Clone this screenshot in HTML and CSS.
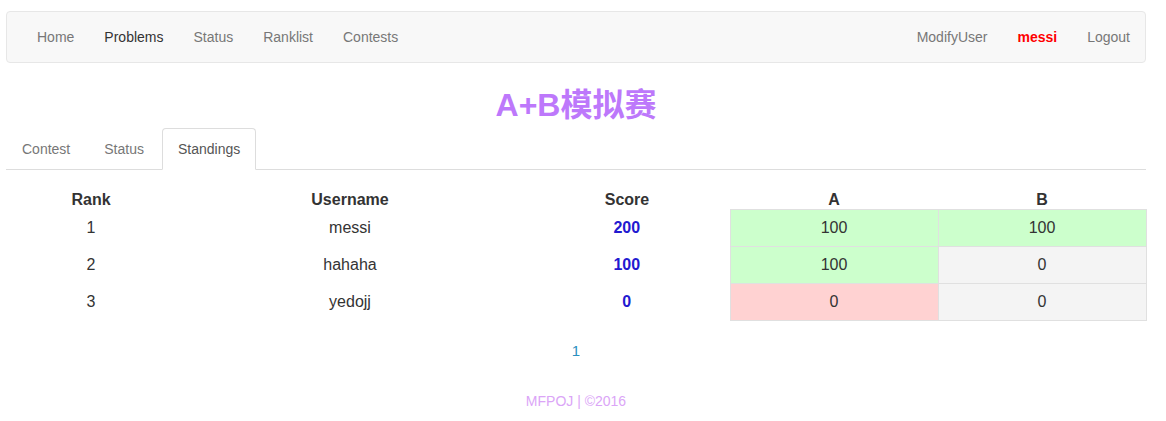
FILE: index.html
```html
<!DOCTYPE html>
<html lang="zh">
<head>
<meta charset="utf-8">
<title>A+B模拟赛</title>
<link rel="stylesheet" href="styles.css">
</head>
<body>
<div class="page">
  <nav class="navbar">
    <ul class="nav">
      <li><a href="#">Home</a></li>
      <li><a href="#" class="active">Problems</a></li>
      <li><a href="#">Status</a></li>
      <li><a href="#">Ranklist</a></li>
      <li><a href="#">Contests</a></li>
    </ul>
    <ul class="nav nav-right">
      <li><a href="#">ModifyUser</a></li>
      <li><a href="#" class="user">messi</a></li>
      <li><a href="#">Logout</a></li>
    </ul>
  </nav>

  <h2 class="title">A+B模拟赛</h2>

  <ul class="tabs">
    <li><a href="#">Contest</a></li>
    <li><a href="#">Status</a></li>
    <li><a href="#" class="current">Standings</a></li>
  </ul>

  <table class="standings">
    <colgroup>
      <col class="c-rank"><col class="c-user"><col class="c-score"><col class="c-prob"><col class="c-prob">
    </colgroup>
    <thead>
      <tr><th>Rank</th><th>Username</th><th>Score</th><th>A</th><th>B</th></tr>
    </thead>
    <tbody>
      <tr><td>1</td><td>messi</td><td class="score">200</td><td class="prob ac">100</td><td class="prob ac">100</td></tr>
      <tr><td>2</td><td>hahaha</td><td class="score">100</td><td class="prob ac">100</td><td class="prob none">0</td></tr>
      <tr><td>3</td><td>yedojj</td><td class="score">0</td><td class="prob wa">0</td><td class="prob none">0</td></tr>
    </tbody>
  </table>

  <div class="pager"><a href="#">1</a></div>

  <footer class="footer">MFPOJ | ©2016</footer>
</div>
</body>
</html>
```

FILE: styles.css
```css
* { box-sizing: border-box; }
html, body { margin: 0; padding: 0; background: #fff; }
body {
  font-family: "Liberation Sans", Arial, "Noto Sans CJK SC", sans-serif;
  font-size: 14px;
  line-height: 20px;
  color: #333;
}
a { text-decoration: none; }

.page { padding: 11px 20px 0 6px; }

.navbar {
  display: flex;
  justify-content: space-between;
  height: 52px;
  padding: 0 15px;
  background: #f8f8f8;
  border: 1px solid #e7e7e7;
  border-radius: 4px;
}
.nav { display: flex; list-style: none; margin: 0; padding: 0; }
.nav-right { margin-right: -15px; }
.nav a { display: block; padding: 15px; line-height: 20px; color: #777; }
.nav a.active { color: #333; }
.nav a.user { color: #ff0000; font-weight: bold; }

.title {
  margin: 25px 0 5px;
  text-align: center;
  font-size: 32px;
  line-height: 35px;
  font-weight: bold;
  color: #bd78fb;
}

.tabs {
  display: flex;
  list-style: none;
  margin: 0;
  padding: 0;
  border-bottom: 1px solid #ddd;
}
.tabs li { margin-bottom: -1px; }
.tabs a {
  display: block;
  margin-right: 2px;
  padding: 10px 15px;
  line-height: 20px;
  color: #777;
  border: 1px solid transparent;
  border-radius: 4px 4px 0 0;
}
.tabs a.current {
  color: #555;
  background: #fff;
  border-color: #ddd #ddd transparent;
}

.standings {
  width: 100%;
  margin-top: 19px;
  border-collapse: collapse;
  table-layout: fixed;
  font-size: 16px;
  text-align: center;
}
.c-rank { width: 170px; }
.c-user { width: 348px; }
.c-score { width: 206px; }
.c-prob { width: 208px; }
.standings th { padding: 1px 0 0; line-height: 19px; font-weight: bold; color: #333; }
.standings td { padding: 8px; line-height: 20px; color: #333; }
.standings td.score { color: #2219d0; font-weight: bold; }
.standings td.prob { border: 1px solid #e0e0e0; }
.standings td.ac { background: #ccffcc; }
.standings td.wa { background: #ffd2d2; }
.standings td.none { background: #f4f4f4; }

.pager { margin-top: 20px; text-align: center; font-size: 15px; line-height: 20px; }
.pager a { color: #2a8fbf; }

.footer {
  margin-top: 30px;
  text-align: center;
  line-height: 20px;
  color: #dba5f7;
}
```
